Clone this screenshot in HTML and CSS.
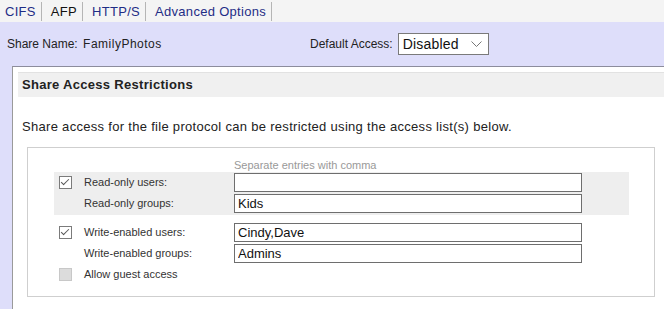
FILE: index.html
```html
<!DOCTYPE html>
<html lang="en">
<head>
  <meta charset="UTF-8">
  <title>AFP Share Settings</title>
  <link rel="stylesheet" href="styles.css">
</head>
<body>
  <div class="tabs">
    <a class="tab">CIFS</a>
    <a class="tab active">AFP</a>
    <a class="tab">HTTP/S</a>
    <a class="tab">Advanced Options</a>
  </div>
  <div class="panel">
    <div class="share-row">
      <div class="share-info">
        <span class="share-label">Share Name:</span>
        <span class="share-name">FamilyPhotos</span>
      </div>
      <span class="default-label">Default Access:</span>
      <div class="select">
        <span>Disabled</span>
        <svg width="11" height="6" viewBox="0 0 11 6"><polyline points="0.5,0.5 5.5,5.5 10.5,0.5" fill="none" stroke="#777" stroke-width="1"/></svg>
      </div>
    </div>
    <div class="box">
      <div class="box-header">Share Access Restrictions</div>
      <p class="desc">Share access for the file protocol can be restricted using the access list(s) below.</p>
      <div class="lists">
        <div class="hint">Separate entries with comma</div>
        <div class="group shaded">
          <span class="check checked"></span>
          <label>Read-only users:</label>
          <input type="text" value="">
          <span></span>
          <label>Read-only groups:</label>
          <input type="text" value="Kids">
        </div>
        <div class="group">
          <span class="check checked"></span>
          <label>Write-enabled users:</label>
          <input type="text" value="Cindy,Dave">
          <span></span>
          <label>Write-enabled groups:</label>
          <input type="text" value="Admins">
          <span class="check disabled"></span>
          <label>Allow guest access</label>
        </div>
      </div>
    </div>
  </div>
</body>
</html>
```

FILE: styles.css
```css
body {
  margin: 0;
  font-family: Tahoma, "Liberation Sans", Arial, sans-serif;
  font-size: 13px;
  letter-spacing: 0.3px;
  color: #222;
  background: #dedefa;
  height: 309px;
  overflow: hidden;
}
.tabs {
  display: flex;
  align-items: flex-end;
  height: 22px;
  background: #f4f4f4;
}
.tab {
  padding: 0 5px;
  height: 19px;
  line-height: 19px;
  margin-bottom: 1px;
  color: #1f2d86;
  font-size: 13px;
  letter-spacing: 0.3px;
  border-right: 1px solid #b5b5b5;
}
.tab + .tab {
  padding-left: 9px;
}
.tab.active {
  color: #111;
}
.panel {
  background: #dedefa;
}
.share-row {
  display: flex;
  align-items: center;
  height: 44px;
  padding-left: 7px;
  font-size: 12px;
  letter-spacing: 0;
  color: #222;
}
.share-info {
  width: 303px;
}
.share-name {
  margin-left: 2px;
  letter-spacing: 0.5px;
}
.default-label {
  margin-right: 5px;
}
.select {
  display: flex;
  align-items: center;
  justify-content: space-between;
  width: 79px;
  height: 20px;
  padding: 0 6px 0 4px;
  background: #fff;
  border: 1px solid #7a7a7a;
  font-size: 14px;
  letter-spacing: 0.2px;
  color: #111;
}
.box {
  box-sizing: border-box;
  height: 243px;
  margin-left: 12px;
  border-top: 1px solid #8c8c9c;
  border-left: 1px solid #9a9a9a;
  background: #fff;
  padding: 5px 0 0 5px;
}
.box-header {
  height: 24px;
  line-height: 24px;
  padding-left: 4px;
  background: #f0f0f0;
  border-top: 1px solid #e2e2e2;
  font-weight: bold;
  color: #222;
}
.desc {
  margin: 22px 0 0 4px;
  line-height: 16px;
}
.lists {
  width: 628px;
  height: 150px;
  margin: 12px 0 0 9px;
  border: 1px solid #cfcfcf;
  box-sizing: border-box;
  padding: 10px 0 0 26px;
  font-family: "Liberation Sans", Arial, sans-serif;
  font-size: 11px;
  letter-spacing: 0;
  color: #333;
}
.hint {
  margin-left: 180px;
  color: #999;
  font-size: 11px;
  line-height: 14px;
}
.group {
  display: grid;
  grid-template-columns: 30px 150px 348px;
  row-gap: 2px;
  align-items: center;
  width: 575px;
  padding: 1px 0 2px;
}
.group.shaded {
  background: #eeeeee;
  margin-bottom: 7px;
}
.group label {
  line-height: 19px;
}
.group input {
  box-sizing: border-box;
  width: 348px;
  height: 19px;
  margin: 0;
  padding: 0 3px;
  border: 1px solid #6e6e6e;
  font-family: Tahoma, "Liberation Sans", Arial, sans-serif;
  font-size: 13px;
  color: #111;
  background: #fff;
}
.check {
  position: relative;
  width: 11px;
  height: 11px;
  margin-left: 5px;
  border: 1px solid #7b7b7b;
  background: #fff;
}
.check.checked::after {
  content: "";
  position: absolute;
  left: 3px;
  top: 0px;
  width: 3px;
  height: 7px;
  border-right: 1px solid #555;
  border-bottom: 1px solid #555;
  transform: rotate(45deg);
}
.check.disabled {
  background: #dcdcdc;
  border-color: #c8c8c8;
}
```
